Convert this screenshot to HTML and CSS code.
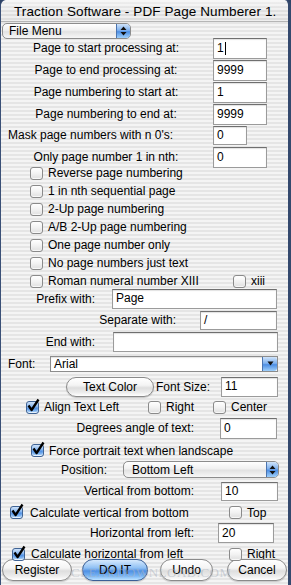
FILE: index.html
```html
<!DOCTYPE html>
<html>
<head>
<meta charset="utf-8">
<link rel="stylesheet" href="styles.css">
</head>
<body>
<div class="window">
  <div class="titlebar"><span class="title">Traction Software - PDF Page Numberer 1.</span></div>

  <div class="row row-menu">
    <div class="popup popup-file">
      <span class="popup-text">File Menu</span>
      <span class="popup-end"><svg width="7" height="10" viewBox="0 0 7 10"><path d="M3.5 0.5 L6.5 4 L0.5 4 Z M3.5 9.5 L6.5 6 L0.5 6 Z" fill="#111"/></svg></span>
    </div>
  </div>

  <div class="row frow r1"><span class="lbl-num">Page to start processing at:</span><div class="field f-num">1<span class="caret"></span></div></div>
  <div class="row frow"><span class="lbl-num">Page to end processing at:</span><div class="field f-num">9999</div></div>
  <div class="row frow"><span class="lbl-num">Page numbering to start at:</span><div class="field f-num">1</div></div>
  <div class="row frow"><span class="lbl-num">Page numbering to end at:</span><div class="field f-num">9999</div></div>
  <div class="row frow r-mask"><span class="lbl-mask">Mask page numbers with n 0's:</span><div class="field f-mask">0</div></div>
  <div class="row frow r-only"><span class="lbl-num">Only page number 1 in nth:</span><div class="field f-num">0</div></div>

  <div class="row crow c-first"><span class="cb"></span><span class="ctext">Reverse page numbering</span></div>
  <div class="row crow"><span class="cb"></span><span class="ctext">1 in nth sequential page</span></div>
  <div class="row crow"><span class="cb"></span><span class="ctext">2-Up page numbering</span></div>
  <div class="row crow"><span class="cb"></span><span class="ctext">A/B 2-Up page numbering</span></div>
  <div class="row crow"><span class="cb"></span><span class="ctext">One page number only</span></div>
  <div class="row crow"><span class="cb"></span><span class="ctext">No page numbers just text</span></div>
  <div class="row crow"><span class="cb"></span><span class="ctext roman">Roman numeral number XIII</span><span class="cb"></span><span class="ctext">xiii</span></div>

  <div class="row r-prefix"><span class="lbl-short">Prefix with:</span><div class="field f-wide">Page</div></div>
  <div class="row r-sep"><span class="lbl-sep">Separate with:</span><div class="field f-sep">/</div></div>
  <div class="row r-end"><span class="lbl-short">End with:</span><div class="field f-wide f-end"></div></div>

  <div class="row r-font">
    <span class="lbl-font">Font:</span>
    <div class="combo"><span class="combo-text">Arial</span><span class="combo-btn"><svg width="7" height="5" viewBox="0 0 7 5"><path d="M0.5 0.5 L6.5 0.5 L3.5 4.5 Z" fill="#111"/></svg></span></div>
  </div>

  <div class="row r-color">
    <span class="btn btn-color">Text Color</span>
    <span class="lbl-size">Font Size:</span>
    <div class="field f-right">11</div>
  </div>

  <div class="row crow r-align">
    <span class="cb checked"><svg class="tick" width="14" height="14" viewBox="0 0 14 14"><path d="M2.5 6.5 L5.6 11 L12.5 0.5" fill="none" stroke="#000" stroke-width="2.3" stroke-linejoin="round"/></svg></span><span class="ctext al-left">Align Text Left</span>
    <span class="cb"></span><span class="ctext al-right">Right</span>
    <span class="cb"></span><span class="ctext">Center</span>
  </div>

  <div class="row r-deg"><span class="lbl-deg">Degrees angle of text:</span><div class="field f-right f-deg">0</div></div>

  <div class="row crow r-force"><span class="cb checked"><svg class="tick" width="14" height="14" viewBox="0 0 14 14"><path d="M2.5 6.5 L5.6 11 L12.5 0.5" fill="none" stroke="#000" stroke-width="2.3" stroke-linejoin="round"/></svg></span><span class="ctext">Force portrait text when landscape</span></div>

  <div class="row r-pos">
    <span class="lbl-pos">Position:</span>
    <div class="popup popup-pos">
      <span class="popup-text">Bottom Left</span>
      <span class="popup-end"><svg width="7" height="10" viewBox="0 0 7 10"><path d="M3.5 0.5 L6.5 4 L0.5 4 Z M3.5 9.5 L6.5 6 L0.5 6 Z" fill="#111"/></svg></span>
    </div>
  </div>

  <div class="row r-vert"><span class="lbl-deg">Vertical from bottom:</span><div class="field f-right f-vert">10</div></div>

  <div class="row crow r-cv"><span class="cb checked"><svg class="tick" width="14" height="14" viewBox="0 0 14 14"><path d="M2.5 6.5 L5.6 11 L12.5 0.5" fill="none" stroke="#000" stroke-width="2.3" stroke-linejoin="round"/></svg></span><span class="ctext cv-text">Calculate vertical from bottom</span><span class="cb"></span><span class="ctext">Top</span></div>

  <div class="row r-horiz"><span class="lbl-deg">Horizontal from left:</span><div class="field f-horiz">20</div></div>

  <div class="row crow r-ch"><span class="cb checked"><svg class="tick" width="14" height="14" viewBox="0 0 14 14"><path d="M2.5 6.5 L5.6 11 L12.5 0.5" fill="none" stroke="#000" stroke-width="2.3" stroke-linejoin="round"/></svg></span><span class="ctext ch-text">Calculate horizontal from left</span><span class="cb"></span><span class="ctext">Right</span></div>

  <div class="row r-buttons">
    <span class="btn b-register">Register</span>
    <span class="btn btn-default b-doit">DO IT</span>
    <span class="btn b-undo">Undo</span>
    <span class="btn b-cancel">Cancel</span>
  </div>

  <div class="watermark">CLEARDOWNLOAD.COM</div>
</div>
</body>
</html>
```

FILE: styles.css
```css
* { box-sizing: border-box; }

html, body {
  margin: 0;
  padding: 0;
  width: 291px;
  height: 585px;
  overflow: hidden;
  background: #2f4468;
}

.window {
  position: relative;
  width: 291px;
  height: 585px;
  border-left: 1px solid #3a5077;
  border-right: 3px solid #34496e;
  border-radius: 6px 6px 0 0;
  background: repeating-linear-gradient(180deg, #f4f4f4 0px, #f4f4f4 2px, #e5e5e5 2px, #e5e5e5 4px);
  font-family: "Liberation Sans", Arial, sans-serif;
  font-size: 12px;
  color: #000;
  overflow: hidden;
}

.titlebar {
  height: 22px;
  border-bottom: 1px solid #b5b5b5;
  background:
    linear-gradient(180deg, rgba(255,255,255,0.55), rgba(255,255,255,0) 60%),
    repeating-linear-gradient(180deg, #eeeeee 0px, #eeeeee 2px, #dedede 2px, #dedede 4px);
  border-radius: 6px 6px 0 0;
  display: flex;
  align-items: center;
  padding-left: 13px;
  white-space: nowrap;
}
.title { font-size: 13.5px; letter-spacing: 0.1px; padding-top: 1px; }

.row { display: flex; align-items: center; white-space: nowrap; }

/* File menu popup */
.row-menu { height: 16px; margin-top: 1px; padding-left: 1px; }
.popup {
  display: flex;
  align-items: center;
  height: 16px;
  border: 1px solid #8c8c8c;
  border-radius: 5px;
  background: linear-gradient(180deg, #ffffff 0%, #f0f0f0 45%, #e2e2e2 55%, #f7f7f7 100%);
  overflow: hidden;
}
.popup-file { width: 129px; }
.popup-text { flex: 1; padding-left: 6px; line-height: 14px; }
.popup-end {
  width: 14px;
  height: 100%;
  display: flex;
  align-items: center;
  justify-content: center;
  border-left: 1px solid #4a74b0;
  background: linear-gradient(180deg, #cfe3fa 0%, #7fb1ee 45%, #4d8ee3 55%, #9fd0fb 100%);
}

/* numeric field rows */
.frow { height: 22px; }
.r1 { margin-top: -2px; }
.lbl-num { width: 204px; margin-left: 3px; text-align: center; }
.lbl-mask { width: 207px; padding-left: 7px; }
.r-mask { height: 20px; }
.r-only { margin-top: 1px; }

.field {
  height: 21px;
  background: #fff;
  border: 1px solid #9b9b9b;
  border-top-color: #6f6f6f;
  box-shadow: inset 0 1px 1px rgba(0,0,0,0.12);
  padding-left: 3px;
  line-height: 19px;
  display: flex;
  align-items: center;
}
.f-num { width: 54px; margin-left: 5px; }
.f-mask { width: 34px; height: 19px; margin-left: 5px; }
.caret { display: inline-block; width: 1px; height: 13px; background: #000; margin-left: 1px; }

/* checkbox rows */
.crow { height: 18px; padding-left: 29px; }
.c-first { margin-top: -4px; }
.cb {
  position: relative;
  width: 13px;
  height: 13px;
  flex: none;
  border: 1px solid #8a8a8a;
  border-radius: 3px;
  background: linear-gradient(180deg, #ffffff 0%, #f2f2f2 50%, #dedede 100%);
  box-shadow: inset 0 -1px 1px rgba(255,255,255,0.8);
}
.cb.checked {
  border-color: #3f6394;
  background: linear-gradient(180deg, #cfe3fa 0%, #7fb1ee 45%, #4d8ee3 55%, #a9d4fb 100%);
}
.tick { position: absolute; left: -1px; top: -3px; overflow: visible; }
.ctext { margin-left: 5px; }
.roman { width: 185px; margin-right: 0; }

/* text fields */
.r-prefix { height: 21px; margin-top: -2px; }
.lbl-short { width: 94px; text-align: right; }
.f-wide { width: 165px; height: 20px; margin-left: 17px; }
.r-sep { height: 22px; }
.lbl-sep { width: 175px; text-align: right; }
.f-sep { width: 77px; height: 19px; margin-left: 24px; }
.r-end { height: 22px; }
.f-end { margin-left: 18px; }

/* font combo */
.r-font { height: 21px; padding-left: 7px; }
.lbl-font { width: 42px; }
.combo {
  display: flex;
  width: 228px;
  height: 16px;
  border: 1px solid #8c8c8c;
  background: #fff;
  box-shadow: inset 0 1px 1px rgba(0,0,0,0.12);
}
.combo-text { flex: 1; padding-left: 3px; line-height: 14px; }
.combo-btn {
  width: 15px;
  height: 100%;
  display: flex;
  align-items: center;
  justify-content: center;
  border-left: 1px solid #4a74b0;
  border-radius: 0 3px 3px 0;
  background: linear-gradient(180deg, #cfe3fa 0%, #7fb1ee 45%, #4d8ee3 55%, #9fd0fb 100%);
}

/* buttons */
.btn {
  display: flex;
  align-items: center;
  justify-content: center;
  height: 20px;
  border: 1px solid #8a8a8a;
  border-radius: 10px;
  background: linear-gradient(180deg, #ffffff 0%, #f4f4f4 40%, #dedede 55%, #ececec 80%, #ffffff 100%);
  box-shadow: 0 1px 1px rgba(0,0,0,0.18);
}
.btn-default {
  border-color: #3a5f96;
  background: linear-gradient(180deg, #d6e9fd 0%, #8fc0f4 40%, #4f90e4 55%, #79b6f5 80%, #bfe3ff 100%);
}

.r-color { height: 23px; margin-top: 1px; }
.btn-color { width: 88px; margin-left: 65px; }
.lbl-size { margin-left: 2px; width: 65px; }
.f-right { width: 57px; height: 20px; }

.r-align { height: 18px; padding-left: 25px; }
.al-left { width: 104px; }
.al-right { width: 47px; }

.r-deg { height: 24px; }
.lbl-deg { width: 193px; text-align: right; }
.f-deg { height: 21px; margin-left: 26px; }

.r-force { height: 21px; padding-left: 30px; }

.r-pos { height: 17px; }
.lbl-pos { width: 106px; text-align: right; }
.popup-pos { width: 156px; height: 17px; margin-left: 16px; }
.popup-pos .popup-text { padding-left: 8px; }
.popup-pos .popup-end { width: 12px; }

.r-vert { height: 26px; }
.f-vert { height: 19px; margin-left: 27px; }

.r-cv { height: 17px; padding-left: 9px; }
.cv-text { width: 199px; margin-left: 7px; }

.r-horiz { height: 24px; }
.f-horiz { width: 56px; height: 20px; margin-left: 24px; }

.r-ch { height: 18px; padding-left: 11px; }
.ch-text { width: 198px; margin-left: 6px; }

.r-buttons { height: 22px; margin-top: -4px; padding-left: 1px; }
.r-buttons .btn { height: 22px; border-radius: 11px; }
.b-register { width: 70px; }
.b-doit { width: 66px; margin-left: 10px; }
.b-undo { width: 53px; margin-left: 12px; }
.b-cancel { width: 60px; margin-left: 14px; }

.watermark {
  position: absolute;
  left: 70px;
  top: 565px;
  font-family: "Liberation Serif", serif;
  font-size: 13px;
  letter-spacing: 0.5px;
  color: rgba(170, 178, 190, 0.55);
  pointer-events: none;
}
```
